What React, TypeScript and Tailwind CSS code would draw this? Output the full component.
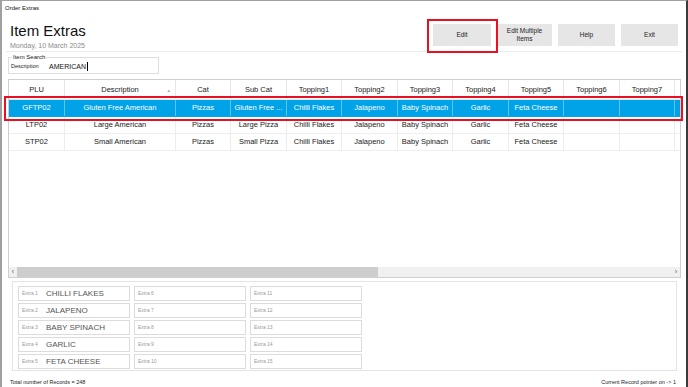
import React from "react";

const columns = [
  { key: "plu", label: "PLU", width: 56 },
  { key: "desc", label: "Description", width: 111 },
  { key: "cat", label: "Cat", width: 55 },
  { key: "sub", label: "Sub Cat", width: 56 },
  { key: "t1", label: "Topping1", width: 55 },
  { key: "t2", label: "Topping2", width: 56 },
  { key: "t3", label: "Topping3", width: 55 },
  { key: "t4", label: "Topping4", width: 56 },
  { key: "t5", label: "Topping5", width: 55 },
  { key: "t6", label: "Topping6", width: 56 },
  { key: "t7", label: "Topping7", width: 55 },
];

const rows = [
  ["GFTP02", "Gluten Free American", "Pizzas", "Gluten Free ...", "Chilli Flakes", "Jalapeno", "Baby Spinach", "Garlic", "Feta Cheese", "", ""],
  ["LTP02", "Large American", "Pizzas", "Large Pizza", "Chilli Flakes", "Jalapeno", "Baby Spinach", "Garlic", "Feta Cheese", "", ""],
  ["STP02", "Small American", "Pizzas", "Small Pizza", "Chilli Flakes", "Jalapeno", "Baby Spinach", "Garlic", "Feta Cheese", "", ""],
];

const extras = [
  ["CHILLI FLAKES", "JALAPENO", "BABY SPINACH", "GARLIC", "FETA CHEESE"],
  ["", "", "", "", ""],
  ["", "", "", "", ""],
];

const Button = ({ children, className }: { children: React.ReactNode; className?: string }) => (
  <div
    className={
      "flex h-[22px] items-center justify-center bg-[#e6e6e6] text-center text-[6.5px] leading-[8px] text-[#222] " +
      (className ?? "")
    }
  >
    {children}
  </div>
);

export default function App() {
  return (
    <div className="relative h-[387px] w-[688px] overflow-hidden border-l-2 border-r-2 border-t border-l-[#a0a0a0] border-r-[#3a3a3a] border-t-[#a0a0a0] bg-white font-['Liberation_Sans',Arial,sans-serif] text-[#222]">
      {/* title bar */}
      <div className="h-[16px] pl-[3px] pt-[3px] text-[6px] leading-[8px] text-[#111]">Order Extras</div>

      {/* header */}
      <div className="flex h-[34px] items-start justify-between pl-[8px] pr-[8px]">
        <div className="pt-[6px]">
          <div className="text-[15px] leading-[16px] text-[#111]">Item Extras</div>
          <div className="pt-[3px] text-[7px] leading-[8px] text-[#8a8a8a]">Monday, 10 March 2025</div>
        </div>
        <div className="relative flex gap-[6px] pt-[7px]">
          <Button className="w-[58px]">Edit</Button>
          <Button className="w-[55px]">
            Edit Multiple
            <br />
            Items
          </Button>
          <Button className="w-[57px]">Help</Button>
          <Button className="w-[57px]">Exit</Button>
          <div className="absolute left-[-6px] top-[2px] h-[34px] w-[71px] border-2 border-[#e81123]" />
        </div>
      </div>
      <div className="mx-[4px] h-px bg-[#ececec]" />

      {/* search */}
      <div className="relative ml-[6px] mt-[5px] h-[17px] w-[151px] border border-[#dedede]">
        <div className="absolute left-[3px] top-[-4px] bg-white px-px text-[6px] leading-[7px] text-[#222]">Item Search</div>
        <div className="flex items-center pt-[4px] pl-[2px]">
          <span className="w-[38px] text-[5.5px] leading-[7px]">Description</span>
          <span className="text-[7px] leading-[9px] text-[#111]">AMERICAN</span>
          <span className="ml-px h-[9px] w-px bg-black" />
        </div>
      </div>

      {/* grid */}
      <div className="relative ml-[6px] mt-[5px] flex h-[199px] w-[673px] flex-col border border-[#cfcfcf]">
        <div className="flex h-[20px] border-b border-[#e6e6e6]">
          {columns.map((c) => (
            <div
              key={c.key}
              style={{ width: c.width }}
              className="relative flex shrink-0 items-center justify-center border-r border-[#e6e6e6] text-[7.5px] text-[#222]"
            >
              {c.label}
              {c.key === "desc" && (
                <span className="absolute right-[4px] top-[8px] text-[4.5px] leading-[5px] text-[#aaa]">▲</span>
              )}
            </div>
          ))}
        </div>
        <div className="flex flex-col">
          {rows.map((r, i) => (
            <div
              key={r[0]}
              className={
                "flex h-[17px] border-b " +
                (i === 0 ? "border-[#00a2e8] bg-[#00a2e8] text-white" : "border-[#efefef] text-[#222]")
              }
            >
              {r.map((v, j) => (
                <div
                  key={j}
                  style={{ width: columns[j].width }}
                  className={
                    "flex shrink-0 items-center justify-center overflow-hidden whitespace-nowrap border-r text-[7.5px] " +
                    (i === 0 ? "border-[#5cc4f0]" : "border-[#ececec]")
                  }
                >
                  {v}
                </div>
              ))}
            </div>
          ))}
        </div>
        <div className="flex-1" />
        {/* scrollbar */}
        <div className="flex h-[10px] items-center bg-[#f0f0f0]">
          <span className="w-[8px] text-center text-[7px] leading-[6px] text-[#555]">‹</span>
          <div className="h-[10px] w-[361px] bg-[#cdcdcd]" />
          <div className="flex-1" />
          <span className="w-[8px] text-center text-[7px] leading-[6px] text-[#555]">›</span>
        </div>
        {/* selection highlight */}
        <div className="absolute left-[-5px] top-[16px] h-[25px] w-[679px] border-2 border-[#e81123]" />
      </div>

      {/* extras */}
      <div className="ml-[10px] mt-[3px] flex h-[90px] w-[665px] gap-[4px] border border-[#e4e4e4] pl-[5px] pt-[4px]">
        {extras.map((col, ci) => (
          <div key={ci} className="flex flex-col gap-[2px]">
            {col.map((v, ri) => (
              <div
                key={ri}
                className="flex h-[15px] w-[112px] items-center border border-[#dcdcdc] pl-[3px]"
              >
                <span className="w-[24px] shrink-0 text-[5px] text-[#9a9a9a]">Extra {ci * 5 + ri + 1}</span>
                <span className="text-[8px] leading-[10px] text-[#555]">{v}</span>
              </div>
            ))}
          </div>
        ))}
      </div>

      {/* footer */}
      <div className="flex justify-between pl-[8px] pr-[10px] pt-[8px] text-[5.5px] leading-[7px] text-[#222]">
        <span>Total number of Records = 248</span>
        <span>Current Record pointer on -&gt; 1</span>
      </div>
    </div>
  );
}
